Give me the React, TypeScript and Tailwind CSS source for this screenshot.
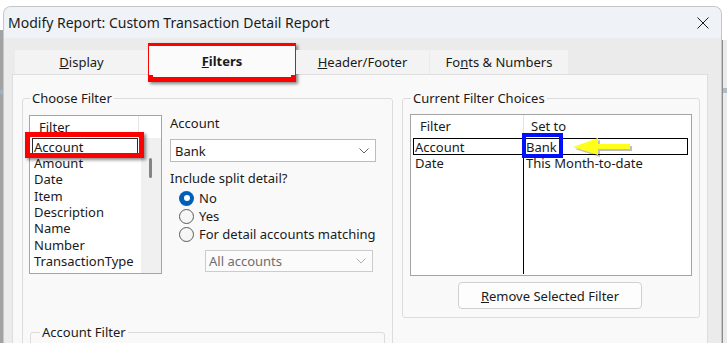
import React from "react";

function Chevron({ color = "#606060" }: { color?: string }) {
  return (
    <svg width="10" height="6" viewBox="0 0 10 6">
      <path d="M0.5 0.5 L5 5 L9.5 0.5" fill="none" stroke={color} strokeWidth="1" />
    </svg>
  );
}

function Radio({ checked }: { checked?: boolean }) {
  return checked ? (
    <span className="w-[15px] h-[15px] rounded-full bg-[#005fb8] flex items-center justify-center shrink-0">
      <span className="w-[6px] h-[6px] rounded-full bg-white" />
    </span>
  ) : (
    <span className="w-[15px] h-[15px] rounded-full border border-[#5a5a5a] bg-[#f6f6f6] shrink-0" />
  );
}

export default function App() {
  const filters = ["Amount", "Date", "Item", "Description", "Name", "Number", "TransactionType"];
  return (
    <div className="relative w-[727px] h-[343px] overflow-hidden bg-white flex font-['Noto_Sans',sans-serif] text-[13px] leading-[16px] text-[#1a1a1a]">
      {/* left edge of window behind */}
      <div className="w-[3px] mt-[30px] flex flex-col bg-[#a2a2a2]">
        <div className="mt-[60px] h-[4px] bg-[#9fb0c2]" />
      </div>

      {/* dialog window */}
      <div className="w-[719px] mt-[6px] flex flex-col rounded-t-[8px] border border-b-0 border-[#c6c6c6] bg-[#ebebeb] overflow-hidden">
        {/* title bar */}
        <div className="h-[31px] shrink-0 bg-[#eff3f8] flex items-center justify-between pl-[4px] pr-[12px]">
          <span className="text-[14px] text-[#1b1b1b]">Modify Report: Custom Transaction Detail Report</span>
          <svg width="12" height="12" viewBox="0 0 12 12">
            <path d="M0.5 0.5 L11.5 11.5 M11.5 0.5 L0.5 11.5" stroke="#1b1b1b" strokeWidth="1" />
          </svg>
        </div>

        {/* body */}
        <div className="flex-1 flex flex-col pl-[8px] pr-[13px] pt-[8px]">
          {/* tabs */}
          <div className="relative z-10 h-[28px] shrink-0 flex items-end pl-[3px] gap-[1px]">
            <div className="w-[133px] h-[24px] flex items-center justify-center bg-[#f3f3f3]">
              <span>
                <span className="underline">D</span>isplay
              </span>
            </div>
            <div className="w-[146px] h-[29px] -mb-[1px] flex items-center justify-center bg-[#fbfbfb] font-bold">
              <span>
                <span className="underline">F</span>ilters
              </span>
            </div>
            <div className="w-[133px] h-[24px] flex items-center justify-center bg-[#f3f3f3]">
              <span>
                <span className="underline">H</span>eader/Footer
              </span>
            </div>
            <div className="w-[138px] h-[24px] flex items-center justify-center bg-[#f3f3f3]">
              <span>
                Fo<span className="underline">n</span>ts &amp; Numbers
              </span>
            </div>
          </div>

          {/* panel */}
          <div className="flex-1 bg-[#f9f9f9] border border-b-0 border-[#dedede] pl-[9px] pt-[15px] flex items-start gap-[9px]">
            {/* Choose Filter */}
            <fieldset className="w-[371px] h-[300px] border border-[#dcdcdc] rounded-[3px] shrink-0">
              <legend className="ml-[7px] px-[2px] leading-[16px] text-[#1a1a1a]">Choose Filter</legend>
              <div className="pl-[6px] pt-[9px] flex flex-col">
                <div className="flex items-start">
                  {/* filter listbox */}
                  <div className="w-[133px] h-[159px] border border-[#a5a5a5] bg-white flex flex-col shrink-0">
                    <div className="h-[22px] flex shrink-0">
                      <div className="w-[109px] border-r border-[#e6e6e6] pl-[9px] flex items-center">Filter</div>
                    </div>
                    <div className="flex flex-1">
                      <div className="w-[111px] pl-[2px] flex flex-col">
                        <div className="w-[106px] h-[17px] border border-[#2b2b2b] pl-[1px] flex items-center">Account</div>
                        {filters.map((f) => (
                          <div key={f} className="h-[16.3px] pl-[2px] flex items-center">
                            {f}
                          </div>
                        ))}
                      </div>
                      <div className="flex-1 bg-[#f0f0f0] pt-[20px] pl-[8px]">
                        <div className="w-[3px] h-[20px] rounded-full bg-[#858585]" />
                      </div>
                    </div>
                  </div>

                  {/* middle column */}
                  <div className="ml-[8px] w-[206px] flex flex-col">
                    <div className="h-[16px]">Account</div>
                    <div className="mt-[8px] h-[23px] border border-[#bcbcbc] bg-white flex items-center justify-between pl-[4px] pr-[6px]">
                      <span>Bank</span>
                      <Chevron />
                    </div>
                    <div className="mt-[8px] h-[16px]">Include split detail?</div>
                    <div className="mt-[3px] flex flex-col">
                      <div className="h-[18px] flex items-center pl-[9px] gap-[5px]">
                        <Radio checked />
                        <span>No</span>
                      </div>
                      <div className="h-[18px] flex items-center pl-[9px] gap-[5px]">
                        <Radio />
                        <span>Yes</span>
                      </div>
                      <div className="h-[18px] flex items-center pl-[9px] gap-[5px]">
                        <Radio />
                        <span className="whitespace-nowrap">For detail accounts matching</span>
                      </div>
                    </div>
                    <div className="mt-[7px] ml-[35px] w-[168px] h-[22px] border border-[#cccccc] bg-[#fbfbfb] flex items-center justify-between pl-[3px] pr-[6px] text-[#6e6e6e]">
                      <span>All accounts</span>
                      <Chevron color="#b0b0b0" />
                    </div>
                  </div>
                </div>

                {/* Account Filter */}
                <fieldset className="mt-[50px] ml-[1px] w-[355px] h-[60px] border border-[#dcdcdc] rounded-[3px]">
                  <legend className="ml-[9px] px-[2px] leading-[16px]">Account Filter</legend>
                </fieldset>
              </div>
            </fieldset>

            {/* Current Filter Choices */}
            <fieldset className="w-[298px] h-[228px] border border-[#dcdcdc] rounded-[3px] shrink-0">
              <legend className="ml-[8px] px-[2px] leading-[16px]">Current Filter Choices</legend>
              <div className="pl-[7px] pt-[8px] flex flex-col">
                <div className="w-[282px] h-[162px] border border-[#a3a3a3] bg-white flex flex-col">
                  <div className="h-[22px] flex shrink-0">
                    <div className="w-[113px] border-r border-[#e3e3e3] pl-[9px] flex items-center">Filter</div>
                    <div className="pl-[7px] flex items-center">Set to</div>
                  </div>
                  <div className="relative flex flex-1">
                    <div className="w-[113px] border-r border-black pt-[1px] pl-[4px] flex flex-col mb-[1px]">
                      <div className="h-[17px] flex items-center">Account</div>
                      <div className="h-[16px] flex items-center">Date</div>
                    </div>
                    <div className="pt-[1px] pl-[2px] flex flex-col">
                      <div className="h-[17px] flex items-center">Bank</div>
                      <div className="h-[16px] flex items-center">This Month-to-date</div>
                    </div>
                    <div className="absolute left-[2px] right-[3px] top-[1px] h-[17px] border border-black" />
                  </div>
                </div>
                <div className="mt-[6px] ml-[48px] w-[184px] h-[27px] rounded-[4px] border border-[#d0d0d0] bg-[#fdfdfd] flex items-center justify-center">
                  <span>
                    <span className="underline">R</span>emove Selected Filter
                  </span>
                </div>
              </div>
            </fieldset>
          </div>
        </div>
      </div>

      {/* right edge of window behind */}
      <div className="flex-1 mt-[40px] border-l border-[#8c8c8c] bg-[#ebebeb] flex flex-col">
        <div className="mt-[48px] h-[5px] bg-[#aebdcc]" />
      </div>

      {/* annotations */}
      <div className="absolute left-[148px] top-[43px] w-[148px] h-[39px] border-[5px] border-[#ff0000] shadow-[2px_2px_3px_rgba(0,0,0,0.45)]" />
      <div className="absolute left-[25px] top-[132px] w-[119px] h-[26px] border-[5px] border-[#ff0000] shadow-[2px_2px_3px_rgba(0,0,0,0.45)]" />
      <div className="absolute left-[522px] top-[133px] w-[41px] h-[25px] border-[4px] border-[#0010ff]" />
      <svg className="absolute left-[572px] top-[136px]" width="64" height="24" viewBox="0 0 64 24">
        <polygon points="3,13 28,4 28,10 60,10 60,15 28,15 28,21" fill="#000" opacity="0.25" />
        <polygon points="1,11 26,2 26,8 58,8 58,13 26,13 26,19" fill="#ffff1a" />
      </svg>
    </div>
  );
}
